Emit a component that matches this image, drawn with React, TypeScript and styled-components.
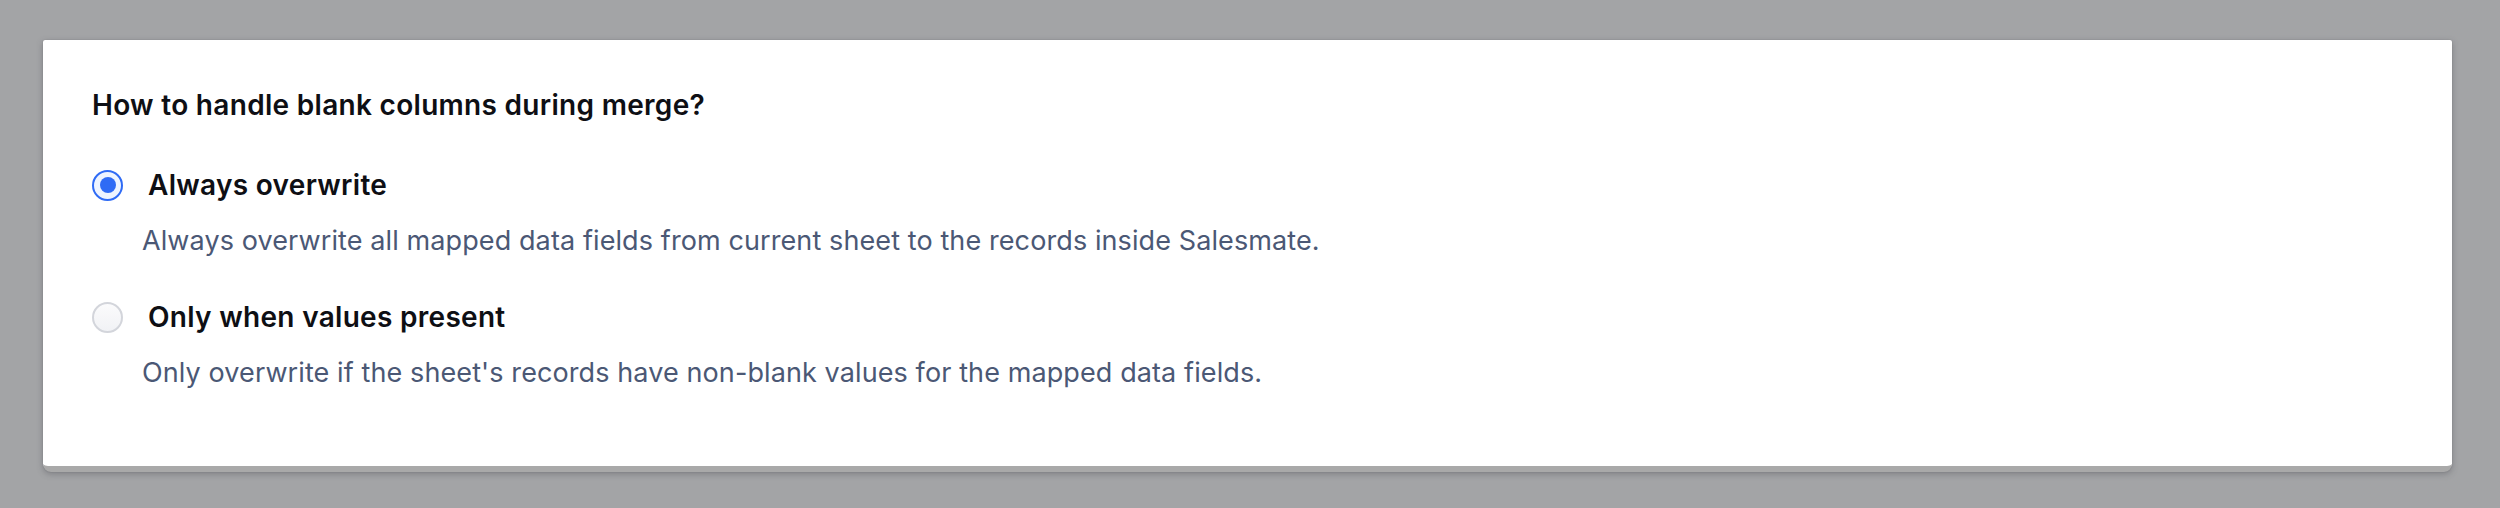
import React, { useState } from 'react'
import styled, { createGlobalStyle } from 'styled-components'

const GlobalStyle = createGlobalStyle`
  html, body {
    margin: 0;
    padding: 0;
    background: #a3a4a6;
    font-family: Inter, 'Noto Sans', 'Liberation Sans', sans-serif;
    -webkit-font-smoothing: antialiased;
  }
`

const Page = styled.div`
  padding: 40px 48px 36px 43px;
`

const Card = styled.div`
  background: #ffffff;
  border-bottom: 6px solid #a9a9a9;
  border-radius: 2px 2px 8px 8px;
  box-shadow: 0 2px 6px rgba(60, 60, 70, 0.35), 0 0 1px rgba(60, 60, 70, 0.4);
  padding: 48px 49px 0;
  height: 432px;
  box-sizing: border-box;
`

const Title = styled.h2`
  margin: 0 0 41px;
  font-size: 28px;
  line-height: 34px;
  font-weight: 600;
  letter-spacing: 0.3px;
  color: #0e0f14;
`

const OptionList = styled.div`
  display: flex;
  flex-direction: column;
  gap: 32px;
`

const Option = styled.label`
  display: flex;
  flex-direction: column;
  cursor: pointer;
`

const OptionHead = styled.div`
  display: flex;
  align-items: center;
  gap: 25px;
  height: 44px;
  margin-bottom: 12px;
`

const Radio = styled.span<{ $checked: boolean }>`
  width: 31px;
  height: 31px;
  box-sizing: border-box;
  border-radius: 50%;
  flex: none;
  display: flex;
  align-items: center;
  justify-content: center;
  border: 2px solid ${(p) => (p.$checked ? '#2f6bf5' : '#d3d5db')};
  background: ${(p) =>
    p.$checked ? '#eef4ff' : 'linear-gradient(180deg, #fbfbfc, #f1f2f5)'};

  &::after {
    content: '';
    display: ${(p) => (p.$checked ? 'block' : 'none')};
    width: 16px;
    height: 16px;
    border-radius: 50%;
    background: #2f6bf5;
  }
`

const OptionLabel = styled.span`
  font-size: 28px;
  font-weight: 600;
  letter-spacing: 0.3px;
  color: #0e0f14;
`

const OptionText = styled.p`
  margin: 0;
  padding-left: 50px;
  font-size: 27px;
  line-height: 44px;
  letter-spacing: 0.1px;
  color: #4b5875;
`

const options = [
  {
    id: 'always',
    label: 'Always overwrite',
    text: 'Always overwrite all mapped data fields from current sheet to the records inside Salesmate.',
  },
  {
    id: 'present',
    label: 'Only when values present',
    text: "Only overwrite if the sheet's records have non-blank values for the mapped data fields.",
  },
]

export default function App() {
  const [value, setValue] = useState('always')

  return (
    <>
      <GlobalStyle />
      <Page>
        <Card>
          <Title>How to handle blank columns during merge?</Title>
          <OptionList>
            {options.map((o) => (
              <Option key={o.id} onClick={() => setValue(o.id)}>
                <OptionHead>
                  <Radio $checked={value === o.id} />
                  <OptionLabel>{o.label}</OptionLabel>
                </OptionHead>
                <OptionText>{o.text}</OptionText>
              </Option>
            ))}
          </OptionList>
        </Card>
      </Page>
    </>
  )
}
